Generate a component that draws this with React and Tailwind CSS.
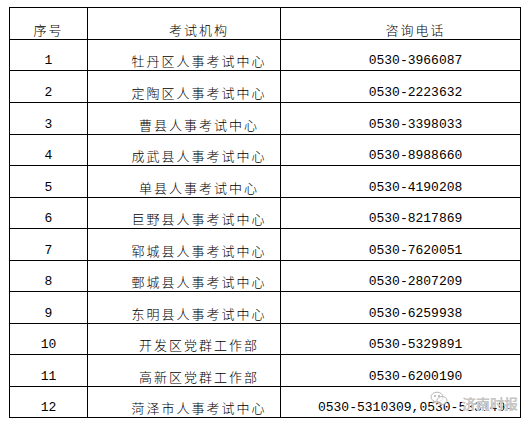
import React from 'react';

const rows = [
  ['1', '牡丹区人事考试中心', '0530-3966087', 'h-[31px]'],
  ['2', '定陶区人事考试中心', '0530-2223632', 'h-[32px]'],
  ['3', '曹县人事考试中心', '0530-3398033', 'h-[32px]'],
  ['4', '成武县人事考试中心', '0530-8988660', 'h-[31px]'],
  ['5', '单县人事考试中心', '0530-4190208', 'h-[32px]'],
  ['6', '巨野县人事考试中心', '0530-8217869', 'h-[31px]'],
  ['7', '郓城县人事考试中心', '0530-7620051', 'h-[32px]'],
  ['8', '鄄城县人事考试中心', '0530-2807209', 'h-[31px]'],
  ['9', '东明县人事考试中心', '0530-6259938', 'h-[32px]'],
  ['10', '开发区党群工作部', '0530-5329891', 'h-[31px]'],
  ['11', '高新区党群工作部', '0530-6200190', 'h-[32px]'],
  ['12', '菏泽市人事考试中心', '0530-5310309,0530-5331494', 'h-[30px]'],
];

const cjk = "font-['Noto_Sans_CJK_SC',sans-serif] font-light text-[13px] leading-[14px] tracking-[2px]";
const mono = "font-['Liberation_Mono',monospace] text-[13px] leading-[14px]";

const Row = ({ no, name, phone, h, last }) => (
  <div className={`grid grid-cols-[78px_193px_1fr] ${h} ${last ? '' : 'border-b border-black'}`}>
    <div className={`flex items-end justify-center pb-[2px] border-r border-black ${mono}`}>{no}</div>
    <div className={`flex items-end justify-center pb-[2px] pl-[30px] border-r border-black ${cjk}`}>{name}</div>
    <div className={`flex items-end justify-center pb-[2px] pl-[30px] ${mono}`}>{phone}</div>
  </div>
);

const WeChatMark = () => (
  <svg width="18" height="16" viewBox="0 0 18 16" fill="none" stroke="#b8b8b8" strokeWidth="1">
    <ellipse cx="7" cy="6" rx="6" ry="4.8" fill="#fff" fillOpacity="0.6" />
    <path d="M3.5 10 L2.5 12.5 L6 10.7" />
    <ellipse cx="12" cy="9.5" rx="5" ry="4" fill="#fff" fillOpacity="0.6" />
    <circle cx="5" cy="5" r="0.7" fill="#b8b8b8" />
    <circle cx="9" cy="5" r="0.7" fill="#b8b8b8" />
  </svg>
);

export default function App() {
  return (
    <div className="w-[529px] h-[426px] bg-white relative text-black">
      <div className="ml-[9px] pt-[7px] w-[512px]">
        <div className="border border-black">
          <div className="grid grid-cols-[78px_193px_1fr] h-[32px] border-b border-black">
            <div className={`flex items-end justify-center pb-[2px] border-r border-black ${cjk}`}>序号</div>
            <div className={`flex items-end justify-center pb-[2px] pl-[30px] border-r border-black ${cjk}`}>考试机构</div>
            <div className={`flex items-end justify-center pb-[2px] pl-[30px] ${cjk}`}>咨询电话</div>
          </div>
          {rows.map(([no, name, phone, h], i) => (
            <Row key={no} no={no} name={name} phone={phone} h={h} last={i === rows.length - 1} />
          ))}
        </div>
      </div>

      <div className="absolute left-[430px] top-[388px] flex items-center gap-[14px] pointer-events-none">
        <WeChatMark />
        <span className="font-['Noto_Sans_CJK_SC',sans-serif] text-[14px] font-bold leading-none text-[#bdbdbd]/90 [text-shadow:0_0_1px_#fff,0_0_1px_#fff] mt-[8px]">
          济南时报
        </span>
      </div>
    </div>
  );
}
